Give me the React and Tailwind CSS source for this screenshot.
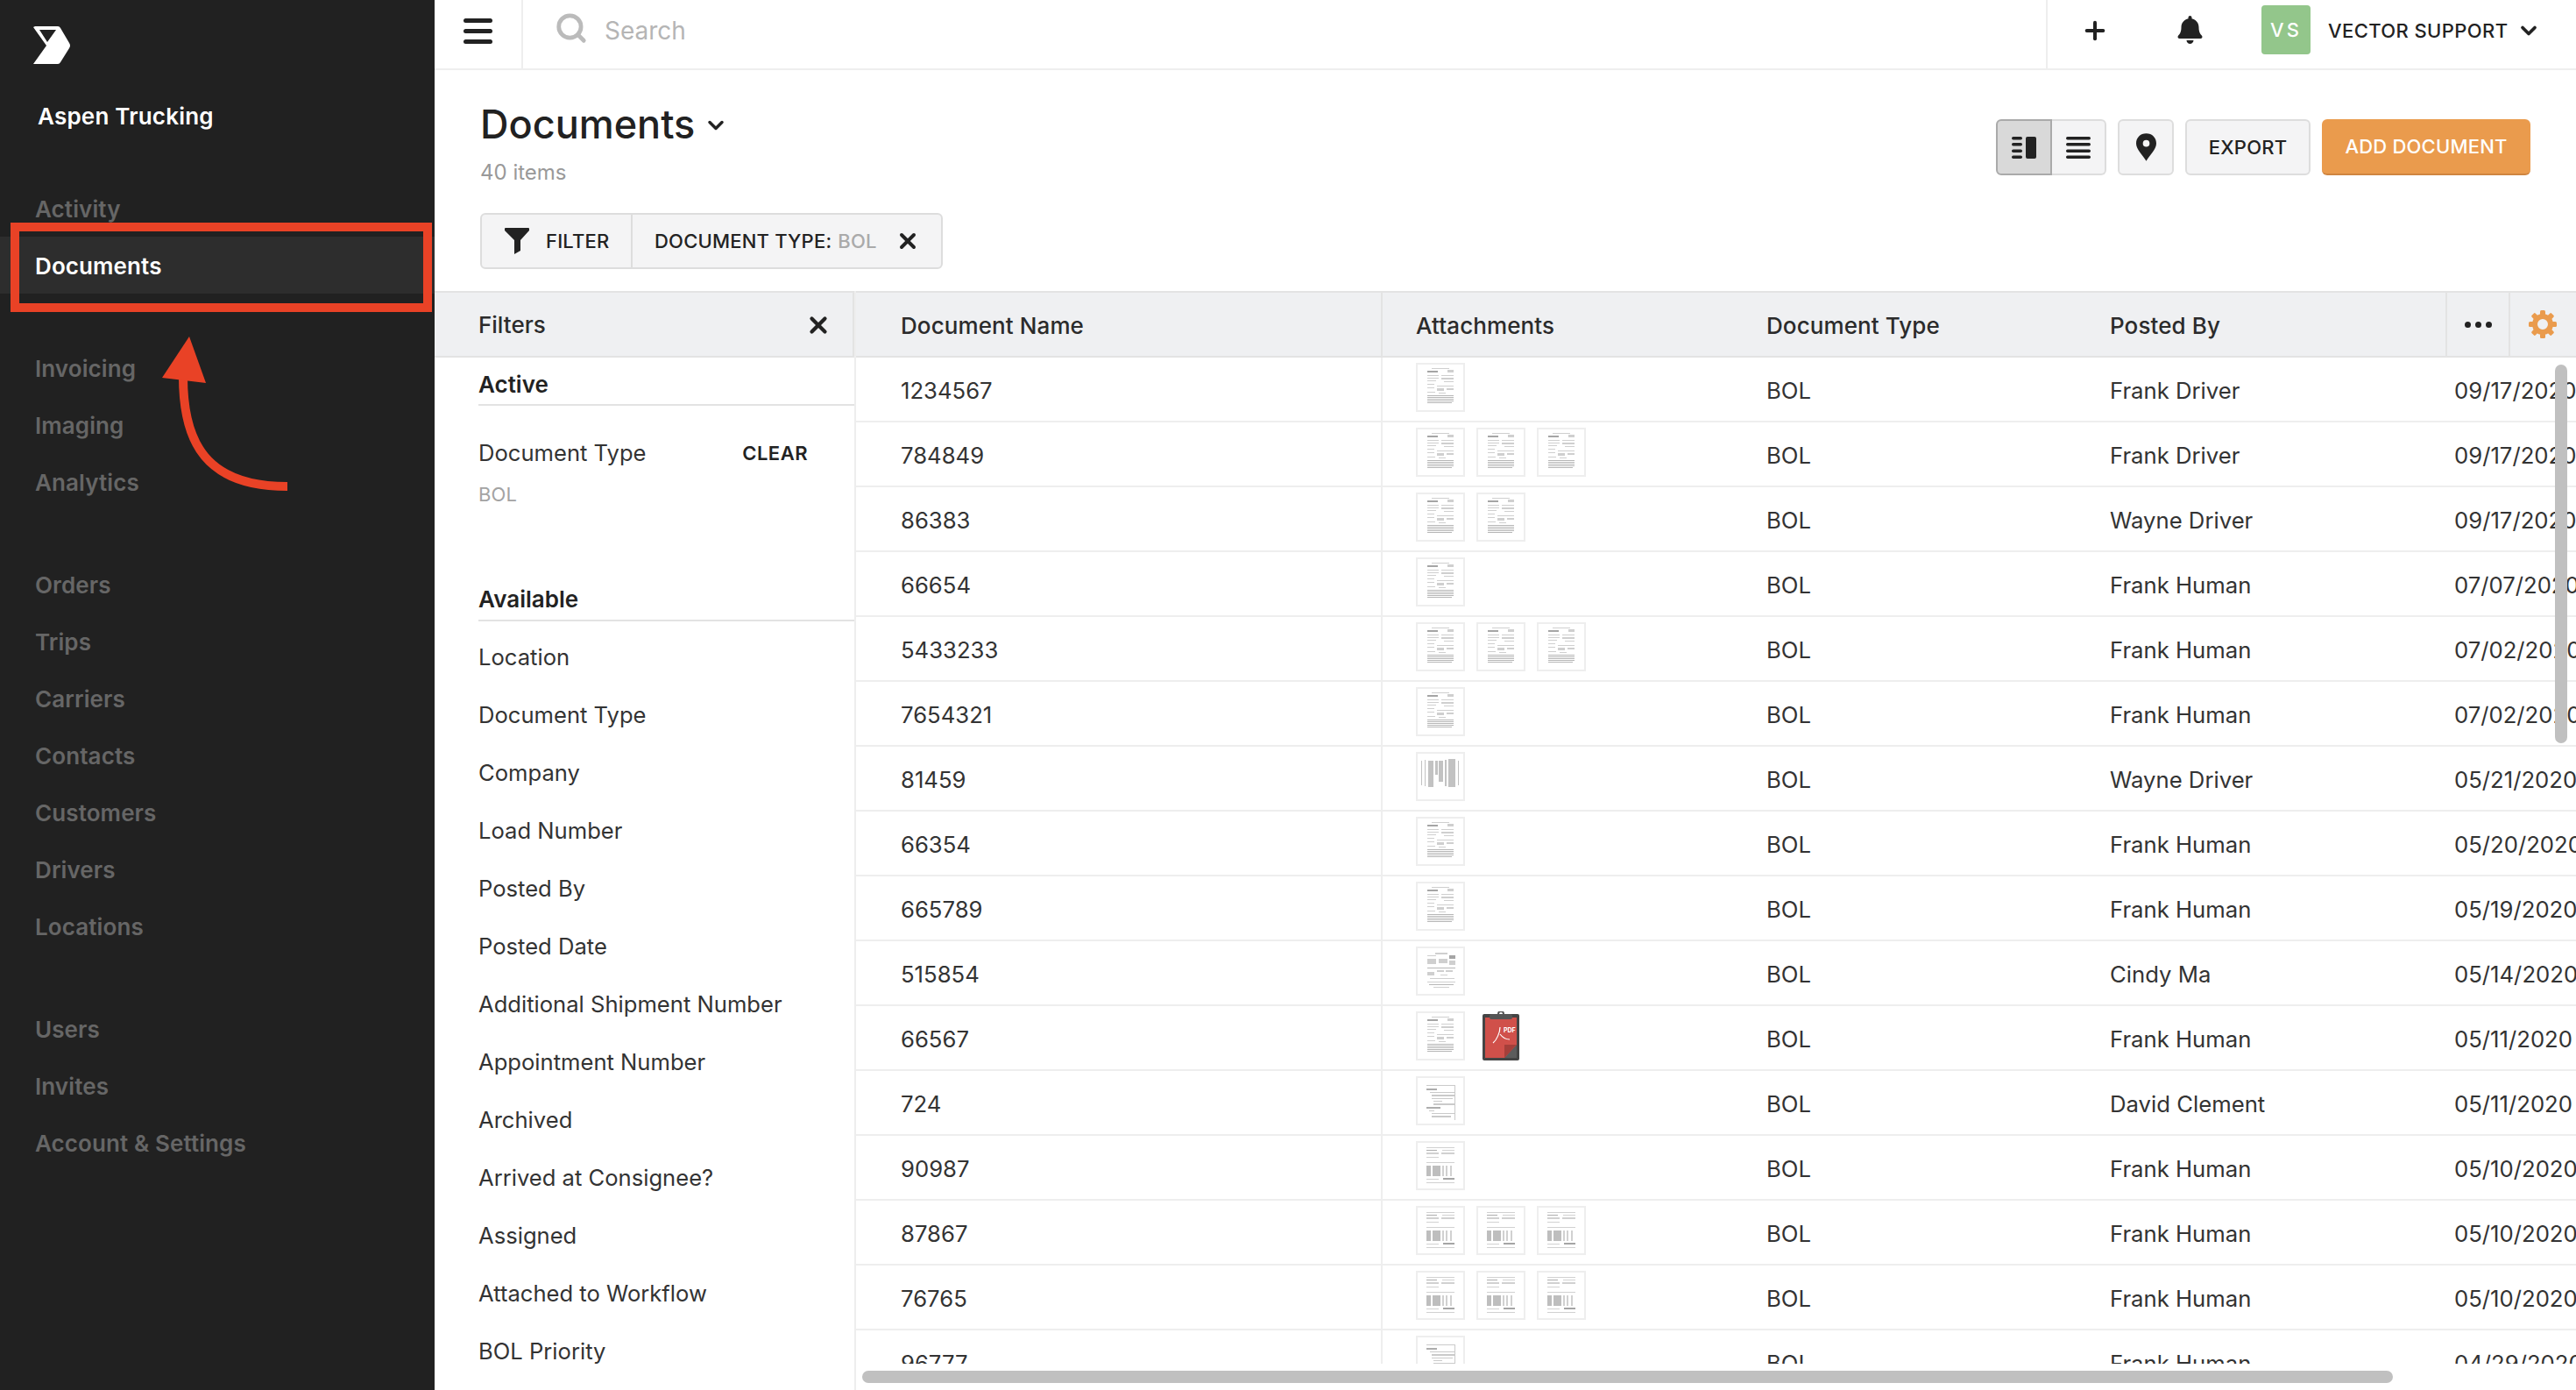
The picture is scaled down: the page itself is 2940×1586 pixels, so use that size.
import React from 'react';
import { ChevronDown, Plus, Search, X } from 'lucide-react';
import { FaBell } from 'react-icons/fa';

const navGroups = [
  ['Activity', 'Documents'],
  ['Invoicing', 'Imaging', 'Analytics'],
  ['Orders', 'Trips', 'Carriers', 'Contacts', 'Customers', 'Drivers', 'Locations'],
  ['Users', 'Invites', 'Account & Settings'],
];

const availableFilters = [
  'Location', 'Document Type', 'Company', 'Load Number', 'Posted By', 'Posted Date',
  'Additional Shipment Number', 'Appointment Number', 'Archived', 'Arrived at Consignee?',
  'Assigned', 'Attached to Workflow', 'BOL Priority',
];

// thumbs: f = form, l = landscape scan, w = waybill, s = sparse page, c = table page, p = pdf
const rows = [
  ['1234567', ['f'], 'Frank Driver', '09/17/2020'],
  ['784849', ['f', 'f', 'f'], 'Frank Driver', '09/17/2020'],
  ['86383', ['f', 'f'], 'Wayne Driver', '09/17/2020'],
  ['66654', ['f'], 'Frank Human', '07/07/2020'],
  ['5433233', ['f', 'f', 'f'], 'Frank Human', '07/02/2020'],
  ['7654321', ['f'], 'Frank Human', '07/02/2020'],
  ['81459', ['l'], 'Wayne Driver', '05/21/2020'],
  ['66354', ['f'], 'Frank Human', '05/20/2020'],
  ['665789', ['f'], 'Frank Human', '05/19/2020'],
  ['515854', ['w'], 'Cindy Ma', '05/14/2020'],
  ['66567', ['f', 'p'], 'Frank Human', '05/11/2020'],
  ['724', ['s'], 'David Clement', '05/11/2020'],
  ['90987', ['c'], 'Frank Human', '05/10/2020'],
  ['87867', ['c', 'c', 'c'], 'Frank Human', '05/10/2020'],
  ['76765', ['c', 'c', 'c'], 'Frank Human', '05/10/2020'],
  ['96777', ['s'], 'Frank Human', '04/29/2020'],
];

const Logo = () => (
  <svg viewBox="0 0 44 46" className="w-[44px] h-[46px]" fill="#fff">
    <path fillRule="evenodd" d="M3 1H29Q31 1 32 3L42 20Q44 23 42 26L32 42Q31 44 29 44H1L16 23L1 2ZM8 5L17 19L27 5Z" />
  </svg>
);

const Arrow = () => (
  <svg viewBox="0 0 496 600" className="absolute left-0 top-0 w-[496px] h-[600px] pointer-events-none">
    <path d="M209 430C209 505 235 555 328 555" fill="none" stroke="#e94226" strokeWidth="10" />
    <path d="M216 384L185 431L235 437Z" fill="#e94226" />
  </svg>
);

const Sidebar = () => (
  <div className="relative w-[496px] shrink-0 bg-[#212121]">
    <div className="pl-[37px] pt-[29px]"><Logo /></div>
    <div className="pl-[43px] pt-[42px] text-[26px] leading-[32px] font-semibold tracking-[0.2px] text-white">Aspen Trucking</div>
    <div className="mt-[56px] flex flex-col gap-[52px]">
      {navGroups.map((group, i) => (
        <div key={i} className="flex flex-col">
          {group.map((item) => (
            <div
              key={item}
              className={
                item === 'Documents'
                  ? 'h-[65px] pl-[40px] pt-[2px] flex items-center text-[26px] font-semibold tracking-[0.1px] text-white bg-[#2d2d2d]'
                  : 'h-[65px] pl-[40px] pt-[2px] flex items-center text-[26px] font-semibold tracking-[0.1px] text-[#666666]'
              }
            >
              {item}
            </div>
          ))}
        </div>
      ))}
    </div>
    {/* annotation over the nav */}
    <div className="absolute left-[12px] top-[254px] w-[481px] h-[102px] border-[10px] border-[#e94226]" />
    <Arrow />
  </div>
);

const TopBar = () => (
  <div className="h-[80px] shrink-0 flex border-b-2 border-[#eeeeee]">
    <div className="w-[101px] pb-[8px] flex items-center justify-center border-r-2 border-[#eeeeee]">
      <div className="w-[33px] flex flex-col gap-[7px]">
        <div className="h-[5px] rounded-full bg-[#222222]" />
        <div className="h-[5px] rounded-full bg-[#222222]" />
        <div className="h-[5px] rounded-full bg-[#222222]" />
      </div>
    </div>
    <div className="flex-1 pb-[8px] flex items-center pl-[36px]">
      <Search className="w-[38px] h-[38px] -mt-[6px] text-[#bbbbbb]" strokeWidth={3} />
      <span className="ml-[19px] text-[28px] text-[#b5b5b5]">Search</span>
    </div>
    <div className="w-[605px] pb-[8px] flex items-center border-l-2 border-[#eeeeee]">
      <Plus className="ml-[38px] w-[32px] h-[32px] text-[#222222]" strokeWidth={3} />
      <FaBell className="ml-[78px] w-[29px] h-[32px] text-[#222222] -mt-[2px]" />
      <div className="ml-[67px] -mt-[2px] w-[56px] h-[56px] rounded-[4px] bg-[#93c68b] flex items-center justify-center text-[22px] font-medium text-white tracking-[3px]">VS</div>
      <span className="ml-[20px] text-[22px] font-medium tracking-[0.4px] text-[#222222]">VECTOR SUPPORT</span>
      <ChevronDown className="ml-[9px] w-[28px] h-[28px] text-[#222222]" strokeWidth={3.2} />
    </div>
  </div>
);

const PageHeader = () => (
  <div className="h-[252px] shrink-0 flex justify-between px-[52px]">
    <div>
      <div className="flex items-center pt-[35px]">
        <span className="text-[45px] leading-[54px] font-medium text-[#212121]">Documents</span>
        <ChevronDown className="ml-[10px] mt-[2px] w-[28px] h-[28px] text-[#222222]" strokeWidth={3} />
      </div>
      <div className="mt-[14px] text-[24px] leading-[28px] text-[#999999]">40 items</div>
      <div className="mt-[32px] flex w-[528px] h-[64px] rounded-[6px] border-2 border-[#dddddd] bg-[#f4f4f5] text-[22px] font-medium tracking-[0.2px] text-[#222222]">
        <div className="w-[172px] flex items-center border-r-2 border-[#dddddd] pl-[26px]">
          <svg viewBox="0 0 28 30" className="w-[28px] h-[30px]" fill="#222">
            <path d="M0 1Q0 0 1 0H27Q28 0 28 1V3L18 14V26L11 30V14L0 3Z" />
          </svg>
          <span className="ml-[19px]">FILTER</span>
        </div>
        <div className="flex-1 flex items-center pl-[25px]">
          <span>DOCUMENT TYPE:</span>
          <span className="ml-[7px] text-[#aaaaaa]">BOL</span>
          <X className="ml-[21px] w-[28px] h-[28px] text-[#222222]" strokeWidth={3.4} />
        </div>
      </div>
    </div>
    <div className="flex gap-[13px] pt-[56px] h-[120px] text-[22px] font-medium tracking-[0.2px]">
      <div className="flex w-[126px] h-[64px]">
        <div className="w-[64px] flex items-center justify-center rounded-l-[6px] border-2 border-[#aaaaaa] bg-[#d9d9d9]">
          <svg viewBox="0 0 28 25" className="w-[28px] h-[25px]" fill="#222">
            <rect x="0" y="0" width="12" height="3.5" rx="1.7" />
            <rect x="0" y="7" width="12" height="3.5" rx="1.7" />
            <rect x="0" y="14.5" width="12" height="3.5" rx="1.7" />
            <rect x="0" y="21.5" width="12" height="3.5" rx="1.7" />
            <rect x="16" y="0" width="12" height="25" rx="2" />
          </svg>
        </div>
        <div className="flex-1 flex items-center justify-center rounded-r-[6px] border-2 border-l-0 border-[#dddddd] bg-[#f4f4f5]">
          <svg viewBox="0 0 28 25" className="w-[28px] h-[25px]" fill="#222">
            <rect x="0" y="0" width="28" height="3.5" rx="1.7" />
            <rect x="0" y="7" width="28" height="3.5" rx="1.7" />
            <rect x="0" y="14.5" width="28" height="3.5" rx="1.7" />
            <rect x="0" y="21.5" width="28" height="3.5" rx="1.7" />
          </svg>
        </div>
      </div>
      <div className="w-[64px] h-[64px] flex items-center justify-center rounded-[6px] border-2 border-[#dddddd] bg-[#f4f4f5]">
        <svg viewBox="0 0 24 33" className="w-[23px] h-[32px]">
          <path fillRule="evenodd" fill="#222" d="M12 0C5 0 0 5 0 12C0 19 8 26 12 33C16 26 24 19 24 12C24 5 19 0 12 0ZM12 8A4 4 0 1 1 12 16A4 4 0 1 1 12 8Z" />
        </svg>
      </div>
      <div className="w-[143px] h-[64px] flex items-center justify-center rounded-[6px] border-2 border-[#dddddd] bg-[#f4f4f5] text-[#222222]">EXPORT</div>
      <div className="w-[238px] h-[64px] flex items-center justify-center rounded-[6px] border-b-2 border-[#cf8540] bg-[#ea9b4d] text-white">ADD DOCUMENT</div>
    </div>
  </div>
);

const FiltersPanel = () => (
  <div className="w-[479px] shrink-0 flex flex-col overflow-hidden">
    <div className="h-[76px] shrink-0 pt-[1px] flex items-center justify-between pl-[50px] pr-[24px] bg-[#eff0f2] border-y-2 border-[#e3e3e3] border-r-2 text-[26px] font-medium text-[#2b2b2b]">
      <span>Filters</span>
      <X className="w-[30px] h-[30px] text-[#222222]" strokeWidth={3.4} />
    </div>
    <div className="pl-[50px]">
      <div className="h-[55px] pt-[8px] flex items-center border-b-2 border-[#e3e3e3] text-[26px] font-semibold text-[#222222]">Active</div>
      <div className="mt-[34px] flex items-center justify-between pr-[53px] h-[40px]">
        <span className="text-[25.6px] text-[#333333]">Document Type</span>
        <span className="text-[22px] font-semibold tracking-[0.5px] text-[#222222]">CLEAR</span>
      </div>
      <div className="mt-[11px] text-[22px] leading-[32px] tracking-[0.2px] text-[#a3a3a3]">BOL</div>
      <div className="mt-[79px] h-[50px] flex items-center border-b-2 border-[#e3e3e3] text-[26px] font-semibold text-[#222222]">Available</div>
      <div className="pt-[8px] flex flex-col">
        {availableFilters.map((name) => (
          <div key={name} className="h-[66px] flex items-center text-[25.6px] text-[#333333]">{name}</div>
        ))}
      </div>
    </div>
  </div>
);

// tiny fake scan of a paperwork page, rough blocks only
const DocLines = ({ kind }) => {
  if (kind === 'l') {
    return (
      <g fill="#b4b4b4">
        <rect x="6" y="10" width="1" height="28" />
        <rect x="10" y="9" width="1" height="30" />
        <rect x="14" y="10" width="6" height="30" />
        <rect x="22" y="10" width="3" height="16" />
        <rect x="26" y="10" width="5" height="24" />
        <rect x="33" y="9" width="2" height="30" />
        <rect x="37" y="8" width="8" height="32" />
        <rect x="48" y="10" width="1" height="28" />
      </g>
    );
  }
  if (kind === 's') {
    return (
      <g fill="#bdbdbd">
        <rect x="12" y="10" width="32" height="1" />
        <rect x="12" y="14" width="12" height="2" fill="#999" />
        <rect x="16" y="18" width="28" height="1" />
        <rect x="18" y="21" width="26" height="2" />
        <rect x="18" y="25" width="24" height="1" />
        <rect x="20" y="28" width="10" height="1" />
        <rect x="20" y="31" width="24" height="2" />
        <rect x="12" y="35" width="16" height="2" fill="#999" />
        <rect x="15" y="39" width="6" height="1" />
        <rect x="18" y="42" width="26" height="1" />
        <rect x="18" y="45" width="22" height="2" />
        <rect x="44" y="10" width="1" height="40" />
      </g>
    );
  }
  if (kind === 'w') {
    return (
      <g fill="#c4c4c4">
        <rect x="22" y="7" width="14" height="2" />
        <rect x="13" y="10" width="10" height="1" />
        <rect x="38" y="10" width="7" height="4" fill="#8f8f8f" />
        <rect x="13" y="14" width="10" height="6" />
        <rect x="26" y="14" width="10" height="5" />
        <rect x="38" y="16" width="7" height="5" />
        <rect x="13" y="24" width="32" height="1" fill="#a5a5a5" />
        <rect x="24" y="27" width="8" height="2" />
        <rect x="34" y="27" width="8" height="2" />
        <rect x="13" y="29" width="8" height="4" />
        <rect x="28" y="32" width="8" height="1" />
        <rect x="16" y="36" width="28" height="1" />
        <rect x="13" y="40" width="32" height="1" />
        <rect x="15" y="43" width="28" height="1" fill="#a5a5a5" />
        <rect x="20" y="46" width="18" height="1" />
      </g>
    );
  }
  if (kind === 'c') {
    return (
      <g fill="#c6c6c6">
        <rect x="12" y="7" width="32" height="1" />
        <rect x="12" y="10" width="12" height="1" fill="#999" />
        <rect x="30" y="10" width="14" height="1" />
        <rect x="12" y="13" width="14" height="2" />
        <rect x="29" y="13" width="15" height="2" />
        <rect x="12" y="18" width="14" height="1" />
        <rect x="12" y="24" width="32" height="1" />
        <rect x="12" y="28" width="5" height="12" fill="#aeaeae" />
        <rect x="19" y="28" width="9" height="12" fill="#aeaeae" />
        <rect x="30" y="28" width="2" height="12" />
        <rect x="34" y="28" width="2" height="12" />
        <rect x="39" y="28" width="2" height="12" />
        <rect x="12" y="43" width="14" height="1" />
        <rect x="31" y="42" width="13" height="2" fill="#8f8f8f" />
        <rect x="12" y="47" width="32" height="1" />
      </g>
    );
  }
  return (
    <g fill="#c4c4c4">
      <rect x="18" y="6" width="20" height="1" />
      <rect x="13" y="9" width="12" height="2" fill="#8f8f8f" />
      <rect x="36" y="8" width="7" height="3" />
      <rect x="13" y="14" width="13" height="1" />
      <rect x="29" y="14" width="14" height="1" />
      <rect x="13" y="17" width="13" height="1" />
      <rect x="29" y="17" width="14" height="2" />
      <rect x="13" y="20" width="10" height="1" />
      <rect x="32" y="21" width="11" height="1" />
      <rect x="13" y="24" width="8" height="1" />
      <rect x="24" y="26" width="19" height="1" />
      <rect x="13" y="28" width="8" height="1" />
      <rect x="24" y="29" width="8" height="3" />
      <rect x="35" y="29" width="8" height="2" />
      <rect x="13" y="33" width="9" height="1" />
      <rect x="26" y="34" width="8" height="1" />
      <rect x="13" y="37" width="30" height="1" fill="#a5a5a5" />
      <rect x="13" y="39" width="30" height="1" fill="#a5a5a5" />
      <rect x="13" y="41" width="30" height="1" fill="#a5a5a5" />
      <rect x="13" y="43" width="30" height="1" fill="#a5a5a5" />
      <rect x="13" y="45" width="28" height="1" fill="#a5a5a5" />
    </g>
  );
};

const Thumb = ({ kind }) => {
  if (kind === 'p') {
    return (
      <svg viewBox="0 0 42 56" className="w-[42px] h-[56px] ml-[7px]">
        <rect x="0" y="3" width="42" height="53" rx="2" fill="#444" />
        <rect x="3" y="7" width="36" height="46" fill="#d0504a" />
        <rect x="8" y="3" width="26" height="6" rx="2" fill="#555" />
        <circle cx="21" cy="3" r="3" fill="none" stroke="#555" strokeWidth="2" />
        <path d="M25 53L39 38V53Z" fill="#5c5c5c" />
        <path d="M25 53L39 38H25Z" fill="#a53f3a" />
        <path d="M12 36C16 33 20 24 20 18M20 26C23 30 27 32 31 32" fill="none" stroke="#fff" strokeWidth="1.2" />
        <text x="24" y="24" fill="#fff" fontSize="7" fontWeight="700" fontFamily="Inter, sans-serif">PDF</text>
      </svg>
    );
  }
  return (
    <div className="w-[56px] h-[56px] border-2 border-[#eeeeee] bg-white">
      <svg viewBox="2 2 52 52" className="w-[52px] h-[52px] blur-[0.5px] opacity-80">
        <DocLines kind={kind} />
      </svg>
    </div>
  );
};

const Gear = () => (
  <svg viewBox="-16 -16 32 32" className="w-[32px] h-[32px]">
    <circle r="9" fill="none" stroke="#ea9b4d" strokeWidth="6" />
    {[0, 45, 90, 135, 180, 225, 270, 315].map((a) => (
      <rect key={a} x="-3" y="-16" width="6" height="6" rx="1.5" fill="#ea9b4d" transform={`rotate(${a})`} />
    ))}
  </svg>
);

const DocTable = () => (
  <div className="relative flex-1 min-w-0 overflow-hidden border-l-2 border-[#eeeeee]">
    <div className="h-[76px] flex items-center bg-[#eff0f2] border-y-2 border-[#e3e3e3] text-[26px] font-medium tracking-[0.1px] text-[#2b2b2b]">
      <div className="w-[601px] shrink-0 pl-[51px] pt-[2px] h-full flex items-center border-r-2 border-[#e3e3e3]">Document Name</div>
      <div className="w-[438px] shrink-0 pl-[38px] pt-[2px]">Attachments</div>
      <div className="w-[392px] shrink-0 pt-[2px]">Document Type</div>
      <div className="w-[383px] shrink-0 pt-[2px]">Posted By</div>
      <div className="w-[74px] shrink-0 h-full flex items-center justify-center border-x-2 border-[#e3e3e3]">
        <div className="flex gap-[5px]">
          <span className="w-[7px] h-[7px] rounded-full bg-[#222222]" />
          <span className="w-[7px] h-[7px] rounded-full bg-[#222222]" />
          <span className="w-[7px] h-[7px] rounded-full bg-[#222222]" />
        </div>
      </div>
      <div className="w-[73px] shrink-0 h-full flex items-center justify-center"><Gear /></div>
    </div>
    <div className="h-[1148px] overflow-hidden">
      {rows.map((row) => (
        <div key={row[0]} className="h-[74px] flex border-b-2 border-[#eeeeee] text-[25.7px] text-[#333333]">
          <div className="w-[601px] shrink-0 pl-[51px] pt-[5px] flex items-center border-r-2 border-[#eeeeee]">{row[0]}</div>
          <div className="w-[438px] shrink-0 pl-[38px] pt-[6px] flex gap-[13px]">
            {row[1].map((kind, i) => <Thumb key={i} kind={kind} />)}
          </div>
          <div className="w-[392px] shrink-0 pt-[5px] flex items-center">BOL</div>
          <div className="w-[393px] shrink-0 pt-[5px] flex items-center">{row[2]}</div>
          <div className="w-[137px] shrink-0 pt-[5px] flex items-center whitespace-nowrap">{row[3]}</div>
        </div>
      ))}
    </div>
    {/* overlay scrollbars */}
    <div className="absolute left-[1939px] top-[84px] w-[14px] h-[432px] rounded-full bg-[#c0c0c0]" />
    <div className="absolute left-[7px] top-[1232px] w-[1747px] h-[14px] rounded-full bg-[#c0c0c0]" />
  </div>
);

export default function App() {
  return (
    <div className="flex w-[2940px] h-[1586px] overflow-hidden bg-white font-['Inter',sans-serif]">
      <Sidebar />
      <div className="flex-1 flex flex-col min-w-0">
        <TopBar />
        <PageHeader />
        <div className="flex-1 flex min-h-0">
          <FiltersPanel />
          <DocTable />
        </div>
      </div>
    </div>
  );
}
